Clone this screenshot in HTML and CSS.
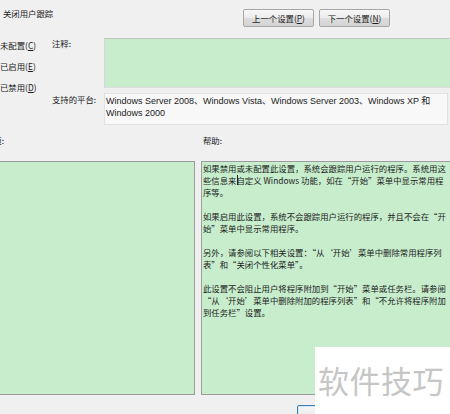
FILE: index.html
```html
<!DOCTYPE html>
<html lang="zh-CN">
<head>
<meta charset="utf-8">
<title>关闭用户跟踪</title>
<link rel="stylesheet" href="styles.css">
</head>
<body>
<div class="window">
  <header class="header">
    <div class="title">关闭用户跟踪</div>
    <div class="nav">
      <button class="btn">上一个设置(<u>P</u>)</button>
      <button class="btn">下一个设置(<u>N</u>)</button>
    </div>
  </header>

  <section class="settings">
    <div class="radios">
      <label class="radio"><span class="dot"></span>未配置(<u>C</u>)</label>
      <label class="radio"><span class="dot"></span>已启用(<u>E</u>)</label>
      <label class="radio"><span class="dot"></span>已禁用(<u>D</u>)</label>
    </div>
    <div class="lbl">注释:</div>
    <div class="comment"></div>
    <div class="lbl lbl-platform">支持的平台:</div>
    <div class="platform">Windows Server 2008、Windows Vista、Windows Server 2003、Windows XP 和 Windows 2000</div>
  </section>

  <section class="panes">
    <div class="pane">
      <div class="pane-label options-label">选项:</div>
      <div class="box options-box"></div>
    </div>
    <div class="pane">
      <div class="pane-label help-label">帮助:</div>
      <div class="box help-box">
        <p>如果禁用或未配置此设置，系统会跟踪用户运行的程序。系统用这<br>些信息来<span class="caret"></span>自定义 Windows 功能，如在“开始”菜单中显示常用程<br>序等。</p>
        <p>如果启用此设置，系统不会跟踪用户运行的程序，并且不会在“开<br>始”菜单中显示常用程序。</p>
        <p>另外，请参阅以下相关设置：“从‘开始’菜单中删除常用程序列<br>表”和“关闭个性化菜单”。</p>
        <p>此设置不会阻止用户将程序附加到“开始”菜单或任务栏。请参阅<br>“从‘开始’菜单中删除附加的程序列表”和“不允许将程序附加<br>到任务栏”设置。</p>
      </div>
    </div>
  </section>

  <footer class="footer">
    <button class="btn btn-ok">确定</button>
    <button class="btn btn-foot">取消</button>
    <button class="btn btn-foot">应用(<u>A</u>)</button>
  </footer>

  <div class="watermark">软件技巧</div>
</div>
</body>
</html>
```

FILE: styles.css
```css
html, body {
  margin: 0;
  padding: 0;
  width: 450px;
  height: 414px;
  overflow: hidden;
  background: #f0f0f0;
}

.window {
  position: relative;
  width: 470px;
  height: 414px;
  overflow: hidden;
  background: #f0f0f0;
  color: #1a1a1a;
  font-family: "Noto Sans CJK SC", "Liberation Sans", sans-serif;
  font-size: 8.4px;
  line-height: 12px;
}

u { text-decoration: underline; }

/* header */
.header {
  display: flex;
  align-items: flex-start;
  height: 38px;
}
.title {
  flex: 0 0 243px;
  padding: 7px 0 0 3px;
  box-sizing: border-box;
}
.nav {
  display: flex;
  gap: 5px;
  margin-top: 9px;
}
.btn {
  height: 18px;
  width: 71px;
  padding: 0;
  border: 1px solid #a6a6a6;
  border-radius: 2px;
  background: linear-gradient(#f7f7f7, #ececec 48%, #dddddd 52%, #d4d4d4);
  font-family: "Noto Sans CJK SC", "Liberation Sans", sans-serif;
  font-size: 8.4px;
  line-height: 12px;
  color: #222;
}

/* settings */
.settings {
  display: grid;
  grid-template-columns: 68px 52px 350px;
  grid-template-rows: 50px 32px;
  row-gap: 5px;
  margin-left: -16px;
}
.radios {
  grid-row: 1 / span 2;
  grid-column: 1;
  display: flex;
  flex-direction: column;
  gap: 9px;
  padding-top: 1px;
}
.radio {
  display: flex;
  align-items: center;
  height: 12px;
  margin-left: -1px;
}
.dot {
  width: 10px;
  height: 10px;
  border: 1px solid #888;
  border-radius: 50%;
  background: #fff;
  box-sizing: border-box;
  margin-right: 7px;
}
.lbl {
  grid-column: 2;
  margin-top: -1px;
}
.lbl-platform { margin-top: 0; }
.comment {
  grid-column: 3;
  background: #c7edcc;
  border-top: 1px solid #c4c4c4;
  border-bottom: 1px solid #dcdcdc;
  border-left: 1px solid #d6d6d6;
}
.platform {
  grid-column: 3;
  width: 344px;
  box-sizing: border-box;
  padding: 1px 1px;
  background: #f8f8f8;
  border: 1px solid #e2e2e2;
  font-family: "Liberation Sans", "Noto Sans CJK SC", sans-serif;
  font-size: 9px;
  line-height: 12px;
  color: #222;
}

/* lower panes */
.panes {
  display: grid;
  grid-template-columns: 197px 280px;
  column-gap: 6px;
  margin-left: -2px;
  padding-top: 9px;
}
.pane-label {
  height: 12px;
  margin-bottom: 15px;
}
.options-label { margin-left: -13px; }
.help-label { padding-left: 2px; }
.box {
  height: 234px;
  box-sizing: border-box;
  background: #c7edcc;
  border: 1px solid #9c9c9c;
}
.help-box {
  padding: 0 0 0 1px;
  white-space: nowrap;
  overflow: hidden;
  color: #1c1c1c;
}
.help-box p {
  margin: 0 0 12px;
}
.caret {
  display: inline-block;
  width: 1px;
  height: 10px;
  margin-right: -1px;
  background: #222;
  vertical-align: -1px;
}

/* footer */
.footer {
  display: flex;
  gap: 6px;
  margin-top: 10px;
  padding-left: 297px;
}
.btn-ok, .btn-foot {
  width: 75px;
  height: 22px;
}
.btn-ok {
  border-color: #3c7fb1;
  box-shadow: inset 0 0 0 1px #cfe8f7;
}

/* watermark overlay */
.watermark {
  position: absolute;
  left: 315px;
  top: 347px;
  width: 140px;
  height: 70px;
  box-sizing: border-box;
  padding: 15px 0 0 3px;
  background: #ffffff;
  color: #c6c6c6;
  font-family: "Noto Sans CJK SC", sans-serif;
  font-size: 31px;
  line-height: 36px;
  letter-spacing: 0.5px;
}
```
